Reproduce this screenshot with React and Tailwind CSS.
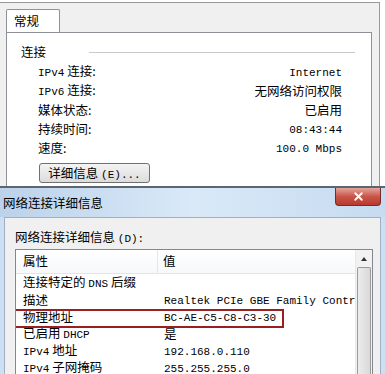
import { X } from 'lucide-react';

const cjk = "font-['Noto_Sans_CJK_SC',sans-serif]";

// ascii parts are drawn in a narrow mono face, like SimSun half-width
const M = ({ children }) => (
  <span className="font-['Liberation_Mono',monospace] text-[11px]">{children}</span>
);

const summary = [
  { label: <><M>IPv4</M> 连接:</>, value: <M>Internet</M> },
  { label: <><M>IPv6</M> 连接:</>, value: '无网络访问权限' },
  { label: '媒体状态:', value: '已启用' },
  { label: '持续时间:', value: <M>08:43:44</M> },
  { label: '速度:', value: <M>100.0 Mbps</M> },
];

const details = [
  { key: <>连接特定的 <M>DNS</M> 后缀</>, value: '' },
  { key: '描述', value: <M>Realtek PCIe GBE Family Controller</M> },
  { key: '物理地址', value: <M>BC-AE-C5-C8-C3-30</M> },
  { key: <>已启用 <M>DHCP</M></>, value: '是' },
  { key: <><M>IPv4</M> 地址</>, value: <M>192.168.0.110</M> },
  { key: <><M>IPv4</M> 子网掩码</>, value: <M>255.255.255.0</M> },
];

const GeneralTab = () => (
  <div className="h-[186px] pt-[2px] bg-white">
    <div className="h-[184px] w-[380px] bg-[#f0f0f0] border-t border-r border-[#9a9a9a] flex flex-col">
      <div className="pl-[6px] pt-[6px] flex">
        <div className="w-[54px] h-[23px] bg-white border border-b-0 border-[#8e9199] rounded-t-[2px] pl-[7px] text-[12.5px] leading-[22px] text-black">
          常规
        </div>
      </div>
      <div className="ml-[6px] w-[366px] flex-1 bg-white border border-b-0 border-[#8e9199] pl-[14px] pr-[29px] pt-[10px] text-[12.5px] text-black">
        <div className="flex items-center h-[18px] whitespace-nowrap">
          <span className="shrink-0">连接</span>
          <div className="ml-[43px] w-[266px] h-px bg-[#c9c9c9] shrink-0" />
        </div>
        <div className="pl-[17px] mt-[1px]">
          {summary.map((row, i) => (
            <div key={i} className="flex justify-between items-center h-[19px] leading-[19px] whitespace-nowrap">
              <span>{row.label}</span>
              <span>{row.value}</span>
            </div>
          ))}
        </div>
        <button className="ml-[18px] mt-[6px] w-[111px] h-[20px] rounded-[3px] border border-[#707070] bg-gradient-to-b from-[#f4f4f4] to-[#dcdcdc] text-[12.5px] leading-[18px] text-black whitespace-nowrap">
          详细信息 <M>(E)...</M>
        </button>
      </div>
    </div>
  </div>
);

const DetailsDialog = () => (
  <div className="flex-1 flex flex-col border-t-2 border-[#5c6670] bg-[#cddff2]">
    <div className="h-[29px] flex items-center justify-between bg-gradient-to-r from-[#bcd2ea] via-[#d9e9f8] to-[#c6dbf0]">
      <span className="pl-[3px] pt-[2px] text-[12.5px] text-black">网络连接详细信息</span>
      <div className="self-start mr-[4px] w-[46px] h-[18px] rounded-b-[4px] border border-t-0 border-[#7a2a25] bg-gradient-to-b from-[#e3a49a] via-[#c9554a] to-[#b8382c] flex items-center justify-center">
        <X size={13} strokeWidth={3.5} className="text-white" />
      </div>
    </div>
    <div className="flex-1 ml-[4px] mr-[4px] bg-[#f0f0f0] border-t border-l border-r border-[#9fb0c4] pl-[10px] pt-[10px]">
      <div className="text-[12.5px] h-[18px] leading-[18px] text-black whitespace-nowrap">
        网络连接详细信息 <M>(D):</M>
      </div>
      <div className="mt-[3px] w-[358px] h-[130px] bg-white border border-b-0 border-[#828790] flex">
        <div className="flex-1 relative overflow-hidden">
          <div className="h-[24px] flex items-center border-b border-[#e5e5e5] bg-gradient-to-b from-white to-[#f7f8fa] text-[12.5px]">
            <span className="w-[142px] pl-[7px] border-r border-[#e3e6ea] h-full flex items-center">属性</span>
            <span className="pl-[5px]">值</span>
          </div>
          {details.map((row, i) => (
            <div key={i} className="h-[17px] leading-[17px] flex items-center whitespace-nowrap text-[12.5px] text-black">
              <span className="w-[143px] pl-[7px] shrink-0">{row.key}</span>
              <span className="pl-[5px]">{row.value}</span>
            </div>
          ))}
          <div className="absolute left-[-3px] top-[59px] w-[271px] h-[19px] border-2 border-[#9a1f22]" />
        </div>
        <div className="w-[17px] flex flex-col bg-[#f2f2f2] border-l border-[#e8e8e8]">
          <div className="h-[17px] flex items-center justify-center">
            <div className="w-0 h-0 border-l-[3px] border-r-[3px] border-b-[4px] border-l-transparent border-r-transparent border-b-[#333]" />
          </div>
          <div className="flex-1 mx-[1px] rounded-t-[2px] border border-b-0 border-[#9a9a9a] bg-gradient-to-r from-[#ececec] to-[#d9d9d9]" />
        </div>
      </div>
    </div>
  </div>
);

export default function App() {
  return (
    <div className={`w-[385px] h-[374px] overflow-hidden flex flex-col bg-white text-black ${cjk}`}>
      <GeneralTab />
      <DetailsDialog />
    </div>
  );
}
